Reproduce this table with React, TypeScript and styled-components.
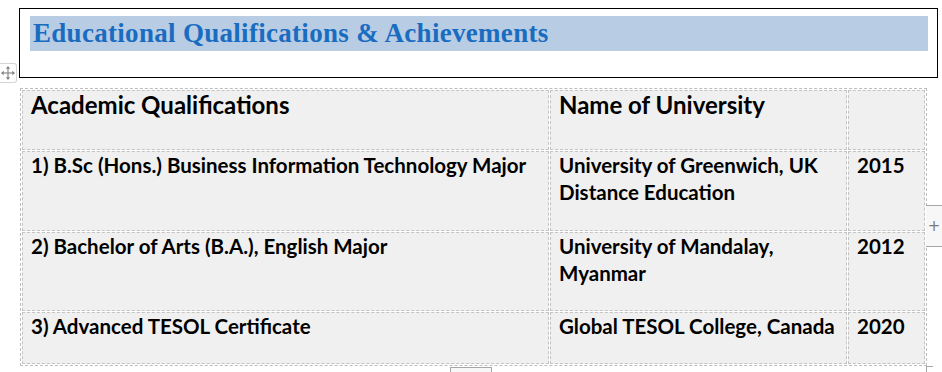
import React from 'react';
import styled, { createGlobalStyle } from 'styled-components';

const GlobalStyle = createGlobalStyle`
	html, body {
		margin: 0;
		padding: 0;
		background: #ffffff;
	}
	body {
		font-family: Lato, 'Liberation Sans', sans-serif;
		overflow: hidden;
	}
`;

const Page = styled.div`
	position: relative;
	width: 942px;
	height: 372px;
	padding: 8px 0 0 19px;
	box-sizing: border-box;
	display: flex;
	flex-direction: column;
`;

const HeadingBox = styled.div`
	width: 919px;
	height: 70px;
	box-sizing: border-box;
	border: 1px solid #000;
	padding: 7px 9px 0 10px;
`;

const HeadingText = styled.h1`
	margin: 0;
	height: 35px;
	background: #b8cce4;
	padding-left: 3px;
	font-family: 'Liberation Serif', serif;
	font-weight: bold;
	font-size: 27px;
	letter-spacing: 0.3px;
	line-height: 35px;
	color: #1a6cc0;
	white-space: nowrap;
`;

const MoveHandle = styled.div`
	position: absolute;
	left: 0;
	top: 63px;
	width: 17px;
	height: 20px;
	box-sizing: border-box;
	border: 1px solid #d4d4d4;
	border-left: none;
	border-radius: 0 3px 3px 0;
	background: #fff;
	display: flex;
	align-items: center;
	justify-content: center;
`;

const Table = styled.table`
	margin-top: 10px;
	margin-left: 1px;
	border: 1px dashed #bdbdbd;
	border-collapse: separate;
	border-spacing: 1px;
	table-layout: fixed;
	width: 907px;
`;

const Row = styled.tr<{ $h: number }>`
	height: ${({ $h }) => $h}px;
`;

const Cell = styled.td<{ $w?: number; $head?: boolean }>`
	${({ $w }) => ($w ? `width: ${$w}px;` : '')}
	box-sizing: border-box;
	border: 1px dashed #c4c4c4;
	background: #f0f0f0;
	padding: 0 4px 0 8px;
	vertical-align: top;
	font-family: Lato, 'Liberation Sans', sans-serif;
	font-weight: bold;
	color: #000;
	white-space: nowrap;
	font-size: ${({ $head }) => ($head ? '24px' : '20.5px')};
	line-height: ${({ $head }) => ($head ? '27px' : '26.6px')};
`;

const AddColumn = styled.div`
	position: absolute;
	left: 926px;
	top: 205px;
	width: 16px;
	height: 42px;
	box-sizing: border-box;
	border-top: 1px solid #a6a6a6;
	border-bottom: 1px solid #a6a6a6;
	background: #f7f7f7;
	display: flex;
	align-items: center;
	justify-content: center;
	color: #7a7a7a;
	font-family: 'DejaVu Sans', sans-serif;
	font-size: 15px;
`;

const AddRowTab = styled.div`
	position: absolute;
	left: 450px;
	top: 367px;
	width: 42px;
	height: 10px;
	box-sizing: border-box;
	border: 1px solid #a6a6a6;
	border-bottom: none;
	background: #f7f7f7;
`;

const ResizeHandle = styled.div`
	position: absolute;
	left: 926px;
	top: 366px;
	width: 7px;
	height: 7px;
	box-sizing: border-box;
	border-top: 1px solid #a6a6a6;
	border-left: 1px solid #a6a6a6;
	background: #fff;
`;

const rows = [
	{ h: 80, q: '1) B.Sc (Hons.) Business Information Technology Major', u: ['University of Greenwich, UK', 'Distance Education'], y: '2015' },
	{ h: 79, q: '2) Bachelor of Arts (B.A.), English Major', u: ['University of Mandalay,', 'Myanmar'], y: '2012' },
	{ h: 52, q: '3) Advanced TESOL Certificate', u: ['Global TESOL College, Canada'], y: '2020' },
];

const App = () => {
	return (
		<>
			<GlobalStyle />
			<Page>
				<HeadingBox>
					<HeadingText>Educational Qualifications &amp; Achievements</HeadingText>
				</HeadingBox>

				<MoveHandle>
					<svg width="14" height="14" viewBox="0 0 13 13" fill="#808080" stroke="#808080">
						<line x1="6.5" y1="2" x2="6.5" y2="11" strokeWidth="1" />
						<line x1="2" y1="6.5" x2="11" y2="6.5" strokeWidth="1" />
						<polygon points="6.5,0 4.5,2.5 8.5,2.5" stroke="none" />
						<polygon points="6.5,13 4.5,10.5 8.5,10.5" stroke="none" />
						<polygon points="0,6.5 2.5,4.5 2.5,8.5" stroke="none" />
						<polygon points="13,6.5 10.5,4.5 10.5,8.5" stroke="none" />
					</svg>
				</MoveHandle>

				<Table>
					<tbody>
						<Row $h={60}>
							<Cell $w={527} $head>Academic Qualifications</Cell>
							<Cell $w={297} $head>Name of University</Cell>
							<Cell $head></Cell>
						</Row>
						{rows.map(r => (
							<Row key={r.y} $h={r.h}>
								<Cell>{r.q}</Cell>
								<Cell>
									{r.u.map(line => (
										<div key={line}>{line}</div>
									))}
								</Cell>
								<Cell>{r.y}</Cell>
							</Row>
						))}
					</tbody>
				</Table>

				<AddColumn>+</AddColumn>
				<AddRowTab />
				<ResizeHandle />
			</Page>
		</>
	);
};

export default App;
